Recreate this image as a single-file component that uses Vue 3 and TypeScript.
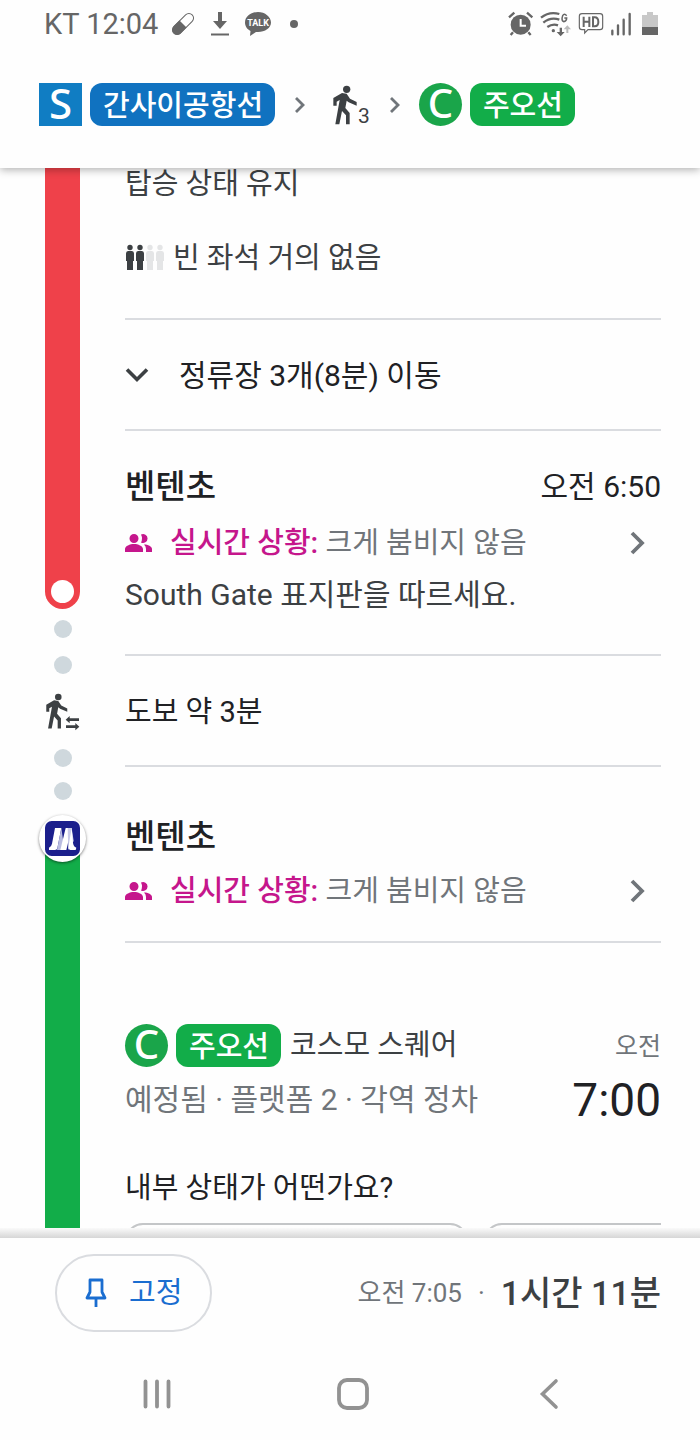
<script setup lang="ts">
interface Badge {
  symbol: string
  name: string
}

const kansai: Badge = { symbol: 'S', name: '간사이공항선' }
const chuo: Badge = { symbol: 'C', name: '주오선' }

const walkPath =
  'M42 118V95L68 80L82 82L92 97L112 107V118L88 108L82 103L78 125L91 140V174H80V147L68 134L60 174H48L61 101L52 106V118Z'

const seats: boolean[] = [true, true, false, false]
const choices: string[] = ['choice-a', 'choice-b']
</script>

<template>
  <div class="screen">
    <div class="status-bar">
      <div class="status-left">
        <span class="clock">KT 12:04</span>
        <svg width="24" height="24" viewBox="0 0 72 72" aria-hidden="true">
          <g transform="rotate(-45 36 36)">
            <rect x="-3" y="22" width="78" height="28" rx="14" fill="none" stroke="#666" stroke-width="3" />
            <path d="M36 21H12a15 15 0 0 0 0 30H36Z" fill="#666" />
          </g>
        </svg>
        <svg width="20" height="26" viewBox="0 0 20 26" aria-hidden="true">
          <path d="M8 1h4v9h5l-7 8-7-8h5ZM1 22.500h18v2H1Z" fill="#666" />
        </svg>
        <svg width="26" height="26" viewBox="0 0 26 26" aria-hidden="true">
          <path d="M13 1C6 1 0 5.500 0 11.500c0 4 2.500 7 5.500 8.500L5 25l6-4h2c7 0 13-4 13-9.500S20 1 13 1Z" fill="#666" />
          <text x="13" y="15" class="talk" text-anchor="middle">TALK</text>
        </svg>
        <span class="dot"></span>
      </div>
      <div class="status-right">
        <svg width="26" height="26" viewBox="0 0 78 78" aria-hidden="true">
          <circle cx="38" cy="41" r="30" fill="#666" />
          <path d="M3 19L19 5M57 5L73 19M15 64L8 72M61 64L68 72" stroke="#666" stroke-width="7" fill="none" />
          <path d="M38 24V44H54" stroke="#fff" stroke-width="6" fill="none" />
        </svg>
        <svg width="32" height="26" viewBox="0 0 96 78" aria-hidden="true">
          <g fill="none" stroke="#666" stroke-width="7">
            <path d="M3 20Q28 0 58 9M10 35Q32 17 58 26M22 48Q38 37 54 43" />
            <path d="M80 14Q73 6 68 14Q63 28 71 32Q80 31 80 21H73" stroke-width="4.500" />
          </g>
          <circle cx="40" cy="59" r="5" fill="#666" />
          <path d="M59 50h7v13h8L62 76 50 63h9Z" fill="#666" />
          <path d="M79 66h6V55h8L82 43 71 55h8Z" fill="#bbb" />
        </svg>
        <svg width="26" height="24" viewBox="0 0 78 72" aria-hidden="true">
          <path d="M12 5H66Q74 5 74 13V45Q74 53 66 53H30L20 63V53H12Q4 53 4 45V13Q4 5 12 5Z" fill="none" stroke="#666" stroke-width="3.500" />
          <path d="M17 14V45M34 14V45M17 29H34M45 16V43H50Q61 43 61 30Q61 16 50 16Z" fill="none" stroke="#666" stroke-width="6" />
        </svg>
        <svg width="22" height="24" viewBox="0 0 66 72" aria-hidden="true">
          <path d="M7 56V67M24 40V67M41 23V67M59 6V67" stroke="#666" stroke-width="7" stroke-linecap="round" />
        </svg>
        <svg class="battery" width="16" height="24" viewBox="0 0 16 24" aria-hidden="true">
          <path d="M5 0h6v3h5v13H0V3h5Z" fill="#c8c8c8" />
          <path d="M0 15h16v8H0Z" fill="#666" />
        </svg>
      </div>
    </div>

    <header class="route">
      <span class="logo square">{{ kansai.symbol }}</span>
      <span class="line blue">{{ kansai.name }}</span>
      <svg class="step" width="12" height="16" viewBox="0 0 12 16" aria-hidden="true">
        <path d="M2 1L9 8L2 15" fill="none" stroke="#70757a" stroke-width="2.800" />
      </svg>
      <span class="walk">
        <svg width="26" height="42" viewBox="38 53 78 126" aria-hidden="true">
          <circle cx="82" cy="69" r="11" fill="#3c4043" />
          <path :d="walkPath" fill="#3c4043" />
        </svg>
        <span class="walk-minutes">3</span>
      </span>
      <svg class="step" width="12" height="16" viewBox="0 0 12 16" aria-hidden="true">
        <path d="M2 1L9 8L2 15" fill="none" stroke="#70757a" stroke-width="2.800" />
      </svg>
      <span class="logo round">{{ chuo.symbol }}</span>
      <span class="line green">{{ chuo.name }}</span>
    </header>

    <main class="feed">
      <section class="leg">
        <div class="rail">
          <div class="track red"><span class="stop-ring"></span></div>
          <span class="walk-dot after-track"></span>
        </div>
        <div class="body">
          <div class="block ride">
            <p class="text stay">탑승 상태 유지</p>
            <p class="text crowd">
              <svg width="39" height="28" viewBox="0 0 39 28" aria-hidden="true">
                <g v-for="(taken, i) in seats" :key="i" :transform="`translate(${i * 10} 0)`" :fill="taken ? '#3c4043' : '#e4e5e6'">
                  <circle cx="5" cy="3.500" r="2.700" />
                  <path d="M3 7H7Q9 7 9 9.500V17H8V26H2V17H1V9.500Q1 7 3 7Z" />
                </g>
              </svg>
              빈 좌석 거의 없음
            </p>
          </div>
          <button type="button" class="expand">
            <svg width="24" height="16" viewBox="0 0 24 16" aria-hidden="true">
              <path d="M2 2.500L12 12.500L22 2.500" fill="none" stroke="#3c4043" stroke-width="3.600" />
            </svg>
            <span class="expand-label">정류장 3개(8분) 이동</span>
          </button>
          <div class="block arrival">
            <div class="title-row">
              <h2>벤텐초</h2>
              <time class="time">오전 6:50</time>
            </div>
            <button type="button" class="live">
              <svg width="28" height="20" viewBox="0 0 28 20" aria-hidden="true">
                <path d="M9 1a4.500 4.500 0 1 1 0 9a4.500 4.500 0 0 1 0-9ZM0 19v-3c0-3 5-5 9-5s9 2 9 5v3ZM16 1.500a4.500 4.500 0 1 1 0 8Q18 5.500 16 1.500ZM19 11.500c4 0 8 2 8 4.500v3h-6v-3q0-3-2-4.500Z" fill="#c5168c" />
              </svg>
              <span><strong>실시간 상황:</strong> 크게 붐비지 않음</span>
              <svg class="go" width="16" height="26" viewBox="0 0 16 26" aria-hidden="true">
                <path d="M2 3L12 13L2 23" fill="none" stroke="#70757a" stroke-width="3.800" />
              </svg>
            </button>
            <p class="text large">South Gate 표지판을 따르세요.</p>
          </div>
        </div>
      </section>

      <section class="leg">
        <div class="rail spread">
          <span class="walk-dot"></span>
          <svg width="35" height="38" viewBox="0 0 105 114" aria-hidden="true">
            <g fill="#3c4043">
              <g transform="translate(-34 -50) scale(.9)">
                <circle cx="82" cy="69" r="11" />
                <path :d="walkPath" />
              </g>
              <path d="M62 80L74 69V76H102V84H74V91ZM103 101L91 90V97H63V105H91V112Z" />
            </g>
          </svg>
          <span class="walk-dot"></span>
        </div>
        <div class="body">
          <div class="block walk-row"><p class="text dark">도보 약 3분</p></div>
        </div>
      </section>

      <section class="leg">
        <div class="rail">
          <span class="walk-dot before-agency"></span>
          <span class="agency">
            <svg width="35" height="35" viewBox="0 0 105 105" role="img" aria-label="Osaka Metro">
              <rect width="105" height="105" rx="20" fill="#1b1f8c" />
              <path d="M30 21H49L37 82Q36 87 30 87H12V80Q19 78 21 68Z" fill="#fff" />
              <path d="M49 21L55 62L48 87H36Z" fill="#b9bce0" />
              <path d="M62 21H80L64 87H46Z" fill="#fff" />
              <path d="M68 21H80L86 60L70 87Z" fill="#c9cbe8" />
              <path d="M80 21L84 66Q86 78 94 80L92 87H76Q70 86 70 80Z" fill="#fff" />
            </svg>
          </span>
          <div class="track emerald"></div>
        </div>
        <div class="body">
          <div class="block boarding">
            <h2>벤텐초</h2>
            <button type="button" class="live">
              <svg width="28" height="20" viewBox="0 0 28 20" aria-hidden="true">
                <path d="M9 1a4.500 4.500 0 1 1 0 9a4.500 4.500 0 0 1 0-9ZM0 19v-3c0-3 5-5 9-5s9 2 9 5v3ZM16 1.500a4.500 4.500 0 1 1 0 8Q18 5.500 16 1.500ZM19 11.500c4 0 8 2 8 4.500v3h-6v-3q0-3-2-4.500Z" fill="#c5168c" />
              </svg>
              <span><strong>실시간 상황:</strong> 크게 붐비지 않음</span>
              <svg class="go" width="16" height="26" viewBox="0 0 16 26" aria-hidden="true">
                <path d="M2 3L12 13L2 23" fill="none" stroke="#70757a" stroke-width="3.800" />
              </svg>
            </button>
          </div>
          <div class="departure">
            <div class="departure-line">
              <span class="logo round">{{ chuo.symbol }}</span>
              <span class="line green">{{ chuo.name }}</span>
              <span class="text headsign">코스모 스퀘어</span>
              <span class="meridiem">오전</span>
            </div>
            <div class="departure-info">
              <p class="text large muted">예정됨 · 플랫폼 2 · 각역 정차</p>
              <time class="big-time">7:00</time>
            </div>
            <p class="text dark question">내부 상태가 어떤가요?</p>
            <div class="choices">
              <div v-for="c in choices" :key="c" class="choice"></div>
            </div>
          </div>
        </div>
      </section>
    </main>

    <div class="edge"></div>
    <footer class="actions">
      <button type="button" class="pin">
        <svg width="22" height="30" viewBox="0 0 22 30" aria-hidden="true">
          <path d="M5 2H17V14L20 20H2L5 14ZM11 20V29" fill="none" stroke="#1a6dd0" stroke-width="2.800" stroke-linejoin="round" />
        </svg>
        고정
      </button>
      <p class="summary">
        <span class="arrive">오전 7:05</span>
        <span class="arrive">·</span>
        <strong>1시간 11분</strong>
      </p>
    </footer>
    <nav class="system-nav">
      <button type="button" aria-label="최근 앱">
        <svg width="32" height="32" viewBox="0 0 32 32"><path d="M4.500 3.500V28.500M16 3.500V28.500M27.500 3.500V28.500" stroke="#929292" stroke-width="3.800" stroke-linecap="round" /></svg>
      </button>
      <button type="button" aria-label="홈">
        <svg width="32" height="32" viewBox="0 0 32 32"><rect x="2" y="2" width="28" height="28" rx="8" fill="none" stroke="#929292" stroke-width="3.800" /></svg>
      </button>
      <button type="button" aria-label="뒤로">
        <svg width="32" height="32" viewBox="0 0 32 32"><path d="M23 3L9.500 16L23 29" fill="none" stroke="#929292" stroke-width="3.600" stroke-linecap="round" /></svg>
      </button>
    </nav>
  </div>
</template>

<style>
body {
  margin: 0;
  background: #fff;
}
</style>

<style scoped>
.screen {
  display: flex;
  flex-direction: column;
  height: 100vh;
  background: #fefefe;
  color: #3c4043;
  font-family: Roboto, "Noto Sans CJK KR", sans-serif;
  font-size: 29px;
  line-height: 40px;
}
p, h2 { margin: 0; }
svg { flex: none; }
button {
  margin: 0;
  padding: 0;
  border: 0;
  background: none;
  color: inherit;
  font: inherit;
  text-align: left;
  cursor: pointer;
}

.status-bar {
  position: relative;
  z-index: 3;
  display: flex;
  justify-content: space-between;
  align-items: center;
  height: 48px;
  padding: 0 42px 0 44px;
  background: #fefefe;
  color: #666;
}
.status-left, .status-right { display: flex; align-items: center; }
.status-left { gap: 15px; }
.status-right { gap: 6px; }
.clock { margin-right: -2px; }
.battery { margin-left: 4px; }
.talk { fill: #fff; font-size: 9px; font-weight: 700; }
.dot { width: 8px; height: 8px; margin-left: 4px; border-radius: 50%; background: #666; }

.route {
  position: relative;
  z-index: 2;
  display: flex;
  align-items: center;
  padding: 35px 39px 42px;
  background: #fefefe;
  box-shadow: 0 2px 8px rgba(0, 0, 0, .3);
}
.logo {
  box-sizing: border-box;
  display: flex;
  justify-content: center;
  align-items: center;
  width: 43px;
  height: 43px;
  padding-bottom: 3px;
  color: #fff;
  font-family: "Noto Sans", sans-serif;
  font-weight: 500;
}
.square { background: #107dc3; font-size: 42px; }
.round { border-radius: 50%; background: #1aa54a; font-size: 40px; }
.line {
  margin-left: 8px;
  padding: 3px 12px 0 13px;
  border-radius: 12px;
  color: #fff;
  font-weight: 500;
}
.blue { background: #1072c0; }
.green { background: #12ad49; }
.step { margin: 0 18px 0 19px; }
.walk { display: flex; align-items: flex-end; margin-left: 8px; }
.walk-minutes { font-size: 21px; line-height: 20px; }

.feed {
  flex: 1;
  display: flex;
  flex-direction: column;
  min-height: 0;
  overflow: hidden;
  padding: 0 39px 0 45px;
}
.leg { display: flex; flex: none; gap: 45px; }
.rail { display: flex; flex: none; flex-direction: column; align-items: center; width: 35px; }
.spread { justify-content: space-between; }
.body { flex: 1; min-width: 0; }
.track { display: flex; flex: 1; justify-content: center; align-items: flex-end; width: 100%; }
.red { border-radius: 0 0 18px 18px; background: #ef414a; }
.emerald { margin-top: -10px; background: #12ad49; }
.stop-ring { width: 23px; height: 23px; margin-bottom: 6px; border-radius: 50%; background: #fff; }
.walk-dot { flex: none; width: 18px; height: 18px; border-radius: 50%; background: #cfd8dd; }
.after-track { margin: 11px 0 18px; }
.before-agency { margin: 15px 0; }
.agency {
  z-index: 1;
  display: flex;
  flex: none;
  justify-content: center;
  align-items: center;
  width: 47px;
  height: 47px;
  border-radius: 50%;
  background: #fff;
  box-shadow: 0 1px 3px rgba(0, 0, 0, .5);
}

.block { border-bottom: 2px solid #dadce0; }
.text { color: #3c4043; }
.text.large { font-size: 30px; }
.text.dark { color: #202124; }
.text.muted { color: #70757a; }
.ride { padding-bottom: 40px; }
.stay { line-height: 32px; }
.crowd { display: flex; align-items: center; gap: 9px; margin-top: 38px; }
.expand {
  display: flex;
  align-items: center;
  gap: 30px;
  width: 100%;
  padding: 34px 0 33px;
  border-bottom: 2px solid #dadce0;
  color: #202124;
  font-size: 30px;
}
.expand-label { padding-top: 2px; }
.arrival { padding: 36px 0 39px; }
.title-row { display: flex; justify-content: space-between; }
h2 { color: #202124; font-size: 33px; font-weight: 500; }
.time { color: #202124; font-size: 30px; }
.live {
  display: flex;
  align-items: center;
  gap: 17px;
  width: 100%;
  margin: 16px 0 12px;
  color: #70757a;
}
.live strong { color: #c5168c; font-weight: 500; }
.go { margin: 0 15px 0 auto; }
.walk-row { padding: 36px 0 33px; }
.boarding { padding: 50px 0 18px; }
.boarding .live { margin-top: 14px; }
.departure { padding-top: 80px; }
.departure-line, .departure-info { display: flex; align-items: center; }
.headsign { margin-left: 9px; }
.meridiem { margin-left: auto; padding-top: 4px; color: #70757a; font-size: 25px; }
.departure-info { justify-content: space-between; margin-top: 13px; }
.big-time { color: #202124; font-size: 46px; }
.question { margin-top: 48px; }
.choices { display: flex; gap: 16px; margin-top: 15px; overflow: hidden; }
.choice {
  box-sizing: border-box;
  flex: none;
  width: 64%;
  height: 96px;
  border: 2px solid #c4c6c8;
  border-radius: 18px;
}

.edge { flex: none; height: 10px; background: linear-gradient(#fafafa, #d6d6d6); }
.actions {
  display: flex;
  justify-content: space-between;
  align-items: center;
  padding: 16px 39px 16px 55px;
}
.pin {
  display: flex;
  align-items: center;
  gap: 22px;
  padding: 17px 28px;
  border: 2px solid #dadce0;
  border-radius: 40px;
  color: #1a6dd0;
}
.summary { display: flex; align-items: center; gap: 16px; }
.arrive { color: #70757a; font-size: 26px; }
.summary strong { color: #3c4043; font-size: 34px; font-weight: 500; }
.system-nav {
  display: grid;
  grid-template-columns: repeat(3, 1fr);
  padding: 30px 53px 30px 59px;
}
.system-nav button { display: flex; justify-content: center; }
</style>
